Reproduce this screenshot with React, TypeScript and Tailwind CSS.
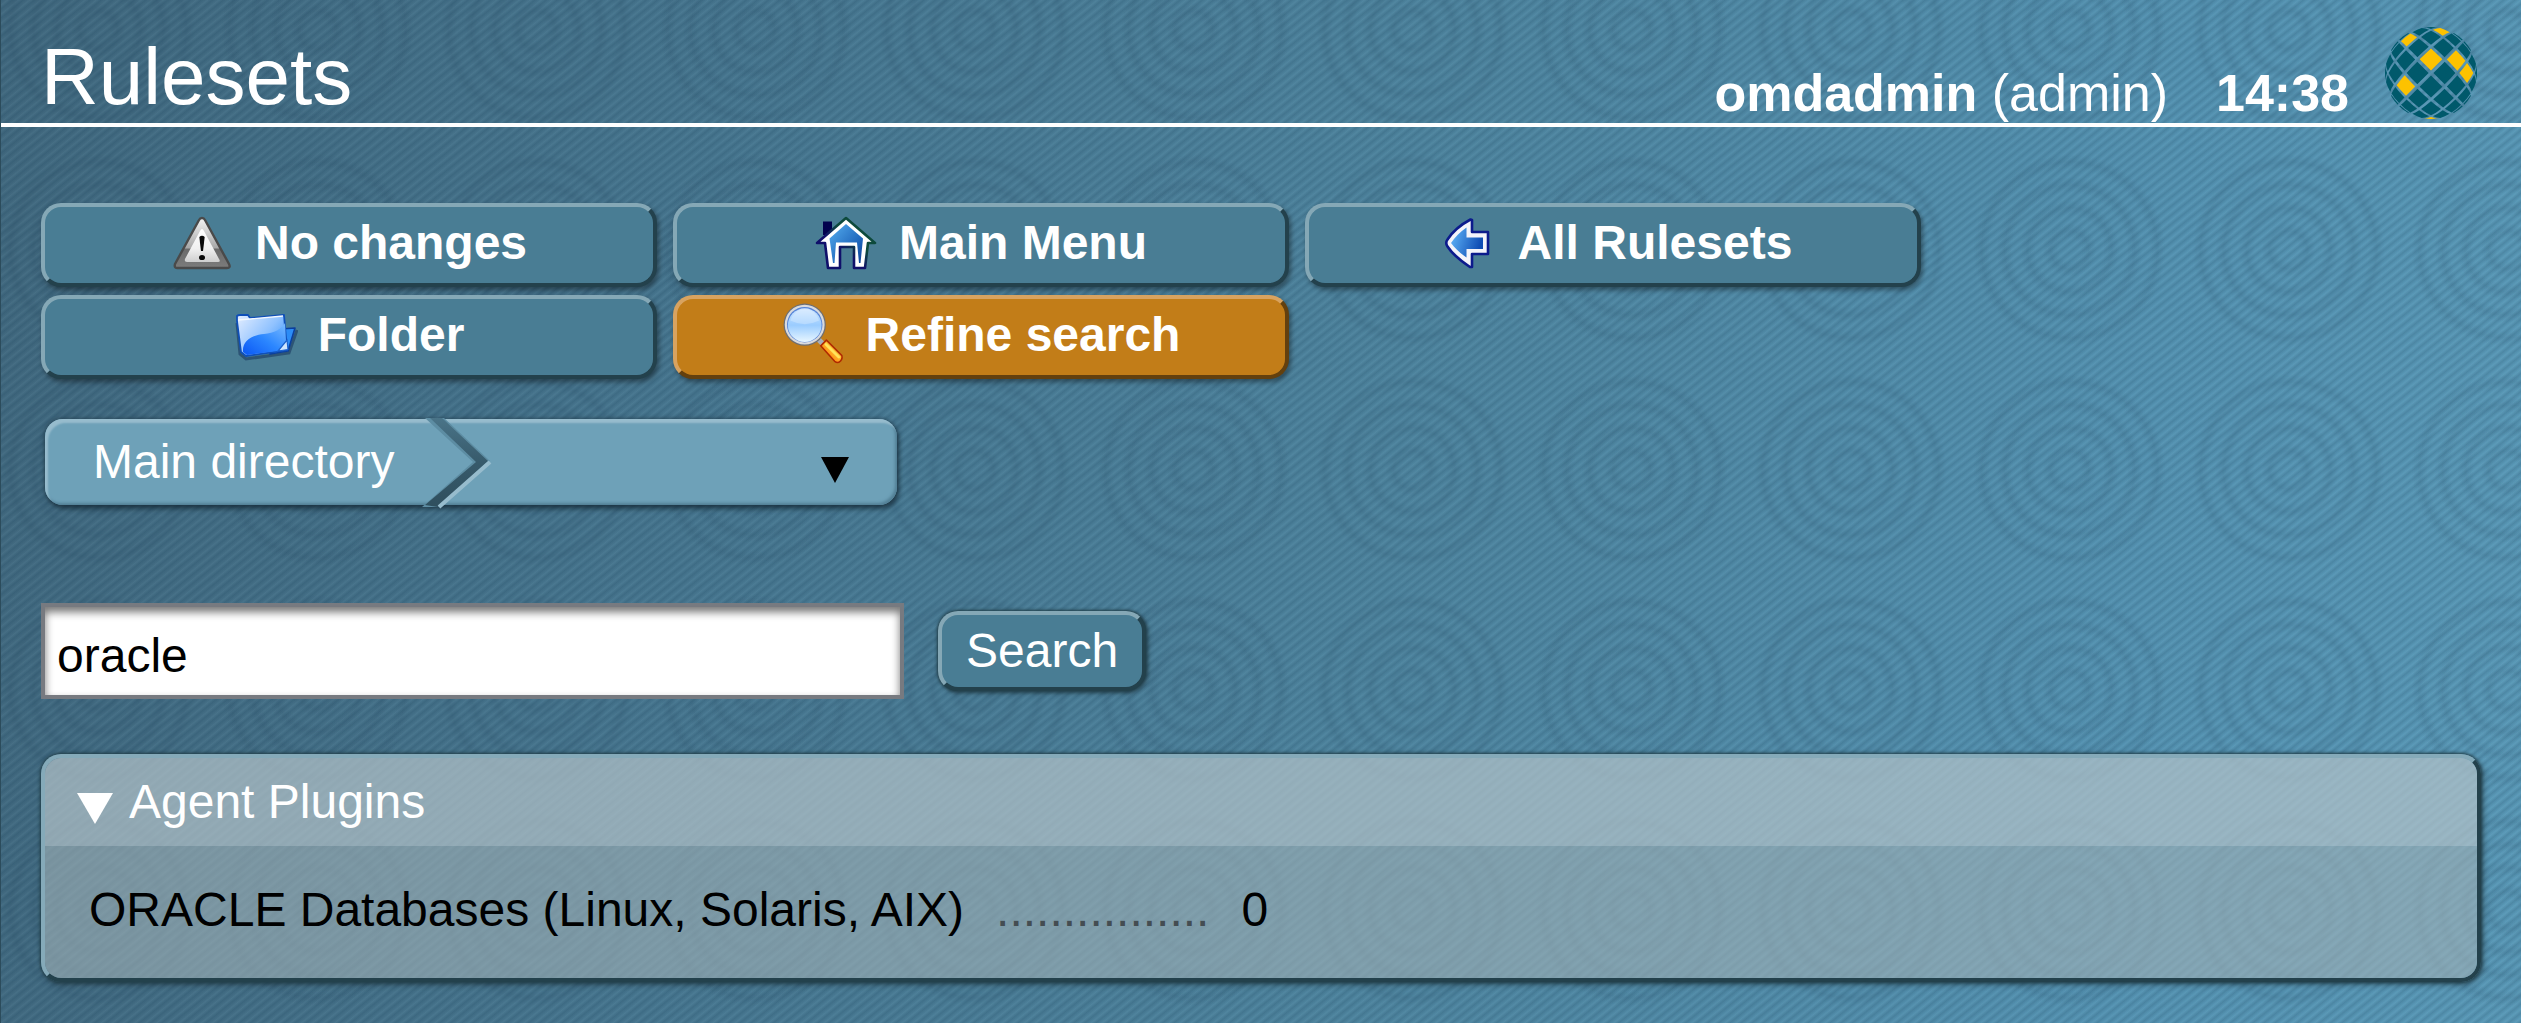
import type { ReactNode } from "react";

const STEP = (17.5 * Math.PI) / 180;
const YELLOW = new Set(["0,1", "2,1", "3,0", "-2,-1", "-2,3", "1,4", "0,-5"]);

// Maps a lattice point onto the visible half of a sphere of radius 46.
function project(u: number, v: number): string {
  const d = Math.hypot(u, v);
  if (d === 0) return "46,46";
  const r = 46 * Math.sin(Math.min(d * STEP, Math.PI / 2));
  return `${(46 + (u / d) * r).toFixed(2)},${(46 - (v / d) * r).toFixed(2)}`;
}

function Globe() {
  const tiles: ReactNode[] = [];
  for (let i = -5; i <= 5; i++) {
    for (let j = -5; j <= 5; j++) {
      if ((i + j) % 2 === 0 || Math.hypot(i, j) > 5.2) continue;
      const s = 0.83;
      const h = s / 2;
      const ring = [
        [s, 0], [h, h], [0, s], [-h, h], [-s, 0], [-h, -h], [0, -s], [h, -h],
      ];
      tiles.push(
        <polygon
          key={`${i},${j}`}
          points={ring.map(([a, b]) => project(i + a, j + b)).join(" ")}
          fill={YELLOW.has(`${i},${j}`) ? "#fdc200" : "#00596b"}
        />,
      );
    }
  }
  return (
    <svg viewBox="0 0 92 92" className="mb-1 ml-9 h-[92px] w-[92px] shrink-0" aria-hidden="true">
      {tiles}
    </svg>
  );
}

function WarningIcon() {
  return (
    <svg viewBox="0 0 64 64" className="h-16 w-16 shrink-0" aria-hidden="true">
      <defs>
        <linearGradient id="warnFrame" x1="0" y1="0" x2="0" y2="1">
          <stop offset="0" stopColor="#f4f4f4" />
          <stop offset="0.6" stopColor="#a8a8a8" />
          <stop offset="0.62" stopColor="#6a6a6a" />
          <stop offset="1" stopColor="#7c7c7c" />
        </linearGradient>
        <linearGradient id="warnFace" x1="0" y1="0" x2="0" y2="1">
          <stop offset="0" stopColor="#ffffff" />
          <stop offset="0.6" stopColor="#f0f0f0" />
          <stop offset="1" stopColor="#cfcfcf" />
        </linearGradient>
      </defs>
      <path d="M31 7 Q29 7 28 9 L4 53 Q3 57 6 57 H56 Q60 57 58 53 L34 9 Q33 7 31 7Z" fill="url(#warnFrame)" stroke="#4a4a4a" strokeWidth="2.4" strokeLinejoin="round" />
      <path d="M31 18 Q30 18 29 20 L14 48 Q13 51 16 51 H47 Q50 51 48 48 L33 20 Q32 18 31 18Z" fill="url(#warnFace)" />
      <path d="M28.3 26 Q31 23.500 33.700 26 L32 40 H30Z" fill="#0a0a0a" />
      <ellipse cx="31" cy="46.500" rx="3" ry="2.600" fill="#0a0a0a" />
    </svg>
  );
}

function FolderIcon() {
  return (
    <svg viewBox="0 0 64 64" className="h-16 w-16 shrink-0" aria-hidden="true">
      <defs>
        <linearGradient id="folderFront" x1="0" y1="0" x2="1" y2="0.7">
          <stop offset="0" stopColor="#e4eeff" />
          <stop offset="0.6" stopColor="#90c2ff" />
          <stop offset="1" stopColor="#3f96fa" />
        </linearGradient>
        <linearGradient id="folderSwirl" x1="0" y1="1" x2="1" y2="0">
          <stop offset="0" stopColor="#0a56f4" />
          <stop offset="0.5" stopColor="#2c87ff" />
          <stop offset="1" stopColor="#7cbcff" />
        </linearGradient>
      </defs>
      <path d="M3 20 L6 51 L12 56 L55 50 L63 27" fill="none" stroke="#0a2450" strokeOpacity="0.45" strokeWidth="3" />
      <path d="M46 26 L61 25 L54 48 L36 51Z" fill="#2c8cf6" stroke="#0c3f9c" strokeWidth="1.600" strokeLinejoin="round" />
      <path d="M3 18 L3 13 Q4 12 6 12 L14 12 L16 15 L50 12 L53 47 L12 53 L7 49Z" fill="url(#folderFront)" stroke="#0f4fb8" strokeWidth="1.800" strokeLinejoin="round" />
      <path d="M4 17 L16 16 L49 13" fill="none" stroke="#f2f8ff" strokeWidth="1.300" />
      <path d="M9 49 C8 38 18 32 30 31 C40 30 48 26 51 20 L52 38 L44 48 L13 52Z" fill="url(#folderSwirl)" />
      <path d="M44 48 L53 37 L54 46.500Z" fill="#cfe6ff" stroke="#1c63cf" strokeWidth="1.200" />
    </svg>
  );
}

function HouseIcon() {
  return (
    <svg viewBox="0 0 64 64" className="h-16 w-16 shrink-0" aria-hidden="true">
      <defs>
        <linearGradient id="houseFill" x1="0" y1="0" x2="1" y2="1">
          <stop offset="0" stopColor="#55aef0" />
          <stop offset="0.7" stopColor="#1c62b8" />
          <stop offset="1" stopColor="#0e3f96" />
        </linearGradient>
        <linearGradient id="houseEdge" x1="0" y1="1" x2="1" y2="0">
          <stop offset="0.400" stopColor="#10106a" />
          <stop offset="0.600" stopColor="#0d4a3c" />
        </linearGradient>
      </defs>
      <path d="M8 10.500 H17 V24 H8Z" fill="#02024e" />
      <path d="M31 7 L60 32 H53 L50 57 H39 V36 H25 V57 H13 L10 32 H2Z" fill="#ffffff" stroke="url(#houseEdge)" strokeWidth="2.600" strokeLinejoin="round" />
      <path d="M31 13 L48 27.500 L45.500 52 H44 L42 31.500 H21 L19.500 52 H18 L14.500 27.500Z" fill="url(#houseFill)" />
    </svg>
  );
}

function ArrowIcon() {
  return (
    <svg viewBox="0 0 64 64" className="h-16 w-16 shrink-0" aria-hidden="true">
      <defs>
        <linearGradient id="arrowFill" x1="0" y1="0" x2="1" y2="0.3">
          <stop offset="0" stopColor="#62b8fb" />
          <stop offset="1" stopColor="#0f4db4" />
        </linearGradient>
      </defs>
      <path d="M36.500 8.500 L38 9 V21 H54 V43 H38 V56 L36 56 C27 50 19 44 13.500 35.500 Q11 32 13.500 28.500 C19 20 28 13 36.500 8.500Z" fill="#f4f4fa" stroke="#0c1b8c" strokeWidth="2.600" strokeLinejoin="round" />
      <path d="M32.500 16.500 V26.500 H49 V38 H32.500 V46.500 C26 42 21 37.500 17 32 C21 26 26 21 32.500 16.500Z" fill="url(#arrowFill)" />
    </svg>
  );
}

function MagnifierIcon() {
  return (
    <svg viewBox="2 3 62 62" className="h-16 w-16 shrink-0" aria-hidden="true">
      <defs>
        <linearGradient id="lens" x1="0" y1="0" x2="0" y2="1">
          <stop offset="0" stopColor="#cfe6ff" />
          <stop offset="0.500" stopColor="#9accff" />
          <stop offset="1" stopColor="#e8f6ff" />
        </linearGradient>
        <linearGradient id="handle" x1="0" y1="1" x2="0.800" y2="0.200">
          <stop offset="0" stopColor="#f04a00" />
          <stop offset="0.500" stopColor="#ff9a1c" />
          <stop offset="1" stopColor="#ffe04a" />
        </linearGradient>
      </defs>
      <path d="M37 38 L44 45" stroke="#a9adb4" strokeWidth="5" />
      <path d="M39.500 44.500 L45 39 L60 54 Q61 58 57 60.500 Q55 61 53 59.500Z" fill="url(#handle)" stroke="#b02a00" strokeWidth="1.500" strokeLinejoin="round" />
      <path d="M44.500 43 L57 55.500" stroke="#ffe45c" strokeWidth="2.500" strokeLinecap="round" />
      <circle cx="24" cy="24" r="20.500" fill="#6d6f74" />
      <circle cx="24" cy="24" r="19.300" fill="#d9dadd" />
      <circle cx="24" cy="24" r="17.200" fill="#5684d8" />
      <circle cx="24" cy="24.500" r="16.300" fill="url(#lens)" />
      <path d="M10 20 Q14 9 24 9 Q34 9 38 20 Q24 27 10 20Z" fill="#ffffff" fillOpacity="0.250" />
    </svg>
  );
}

type ContextButtonProps = { icon: ReactNode; label: string; hot?: boolean };

function ContextButton({ icon, label, hot = false }: ContextButtonProps) {
  const tone = hot
    ? "border-t-[#d8a360] border-l-[#d8a360] border-r-[#63400e] border-b-[#63400e] bg-[#c27d18]"
    : "border-t-[#85a8b6] border-l-[#85a8b6] border-r-[#23414c] border-b-[#23414c] bg-[#497d94]";
  return (
    <a
      href="#"
      className={`flex h-[84px] w-[616px] items-center justify-center gap-5 rounded-[20px] border-4 pb-1 text-5xl font-bold text-white shadow-[2px_3px_5px_rgba(0,0,0,0.4)] ${tone}`}
    >
      {icon}
      {label}
    </a>
  );
}

export default function App() {
  return (
    <div className="relative isolate min-h-screen border-l border-[#2c4c5c] bg-[linear-gradient(95deg,#42697f_0%,#487790_28%,#4f859f_55%,#5694b3_84%,#5b9ab8_100%)] font-['Liberation_Sans',Arial,sans-serif] text-black">
      <div className="absolute inset-0 -z-10 bg-[radial-gradient(circle,rgba(25,55,80,0)_11px,rgba(25,55,80,0.1)_19px,rgba(25,55,80,0)_27px,rgba(25,55,80,0)_34px,rgba(25,55,80,0.1)_42px,rgba(25,55,80,0)_50px,rgba(25,55,80,0)_57px,rgba(25,55,80,0.1)_65px,rgba(25,55,80,0)_73px,rgba(25,55,80,0)_80px,rgba(25,55,80,0.1)_88px,rgba(25,55,80,0)_96px)] bg-[size:219px_220px] bg-[position:-12px_-80px]" />
      <div className="absolute inset-0 -z-10 bg-[repeating-linear-gradient(141deg,rgba(20,60,85,0.19)_0px,rgba(20,60,85,0.02)_3px,rgba(130,180,200,0.06)_4px,rgba(20,60,85,0.19)_7px)]" />

      <header className="flex h-[127px] items-end border-b-4 border-white pr-11 pl-10 text-white">
        <h1 className="text-[80px] leading-[92px]">Rulesets</h1>
        <div className="ml-auto flex items-end">
          <p className="flex gap-12 text-[52px] leading-[60px]">
            <span>
              <b>omdadmin</b> (admin)
            </span>
            <b>14:38</b>
          </p>
          <Globe />
        </div>
      </header>

      <main className="px-10 pt-[76px]">
        <div className="flex max-w-[1900px] flex-wrap gap-x-4 gap-y-2">
          <ContextButton icon={<WarningIcon />} label="No changes" />
          <ContextButton icon={<HouseIcon />} label="Main Menu" />
          <ContextButton icon={<ArrowIcon />} label="All Rulesets" />
          <ContextButton icon={<FolderIcon />} label="Folder" />
          <ContextButton icon={<MagnifierIcon />} label="Refine search" hot />
        </div>

        <nav
          aria-label="Folder path"
          className="mt-10 ml-1 flex h-[86px] w-[852px] items-stretch rounded-[18px] bg-[#6ea1b8] text-5xl shadow-[inset_3px_4px_2px_#97bccd,inset_-2px_-2px_3px_#527f95,2px_4px_5px_rgba(20,40,52,0.65),0_0_4px_1px_rgba(30,55,70,0.6)]"
        >
          <a href="#" className="flex items-center pr-7 pl-12 text-white">
            Main directory
          </a>
          <svg viewBox="0 0 72 86" className="h-[86px] w-[72px] shrink-0 overflow-visible" aria-hidden="true">
            <defs>
              <linearGradient id="chevron" x1="0" y1="0" x2="0" y2="1">
                <stop offset="0" stopColor="#4a7488" />
                <stop offset="0.500" stopColor="#375a6b" />
                <stop offset="1" stopColor="#2f4f5e" />
              </linearGradient>
            </defs>
            <path d="M3 -1 H22 L68 42 L17 88 H0 L51 43Z" fill="#5d8da3" />
            <path d="M8 -1 H20 L66 42 L16 88 L3 86 L54 43Z" fill="url(#chevron)" />
            <path d="M68 43 L17 88" fill="none" stroke="#97bccd" strokeWidth="4" />
          </svg>
          <div className="relative flex-1">
            <select aria-label="Subfolder" className="h-full w-full appearance-none bg-transparent px-8 text-transparent">
              <option value=""></option>
            </select>
            <svg viewBox="0 0 28 26" className="pointer-events-none absolute right-12 bottom-[22px] h-[26px] w-7" aria-hidden="true">
              <path d="M0 0 H28 L14 26Z" fill="#000000" />
            </svg>
          </div>
        </nav>

        <form className="mt-[98px] flex items-center gap-[34px]" onSubmit={(e) => e.preventDefault()}>
          <input
            type="text"
            aria-label="Search term"
            defaultValue="oracle"
            className="h-24 w-[863px] border-4 border-[#777a80] bg-white px-3 pt-2 text-5xl text-black shadow-[inset_0_5px_8px_rgba(0,0,0,0.55)] outline-none"
          />
          <button
            type="submit"
            className="h-20 rounded-[20px] border-4 border-t-[#85a8b6] border-r-[#23414c] border-b-[#23414c] border-l-[#85a8b6] bg-[#497d94] px-6 text-5xl text-white shadow-[0_0_3px_1px_#23414c,2px_2px_5px_rgba(0,0,0,0.4)]"
          >
            Search
          </button>
        </form>

        <section className="mt-[55px] rounded-[20px] border-4 border-t-[#85aab9] border-r-[#23414c] border-b-[#23414c] border-l-[#85aab9] shadow-[0_0_3px_1px_#23414c,2px_2px_6px_rgba(0,0,0,0.45)]">
          <div className="overflow-hidden rounded-2xl bg-[#a2b2b8]/60">
            <h2 className="bg-[#d8e4ea]/25">
              <button type="button" aria-expanded="true" className="flex h-[88px] w-full items-center gap-4 pl-8 text-5xl text-white">
                <svg viewBox="0 0 36 31" className="mt-3 h-[31px] w-9" aria-hidden="true">
                  <path d="M0 0 H36 L18 31Z" fill="#ffffff" />
                </svg>
                Agent Plugins
              </button>
            </h2>
            <dl className="flex h-[132px] items-center px-11 pb-1 text-5xl">
              <dt className="flex">
                <a href="#">ORACLE Databases (Linux, Solaris, AIX)</a>
                <span className="ml-8 text-[#444d52]" aria-hidden="true">................</span>
              </dt>
              <dd className="ml-8">0</dd>
            </dl>
          </div>
        </section>
      </main>
    </div>
  );
}
